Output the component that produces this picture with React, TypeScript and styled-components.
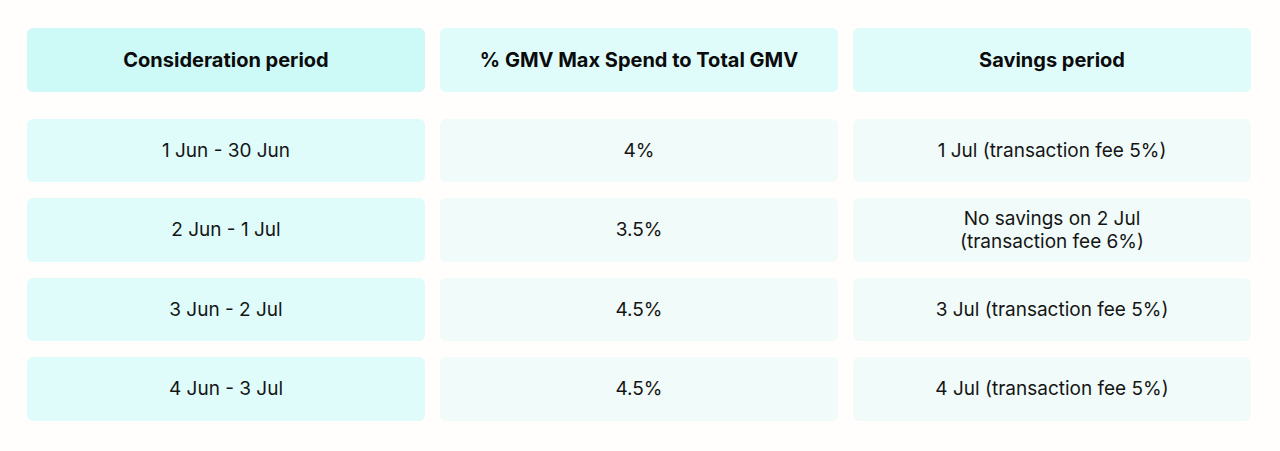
import React from "react";
import styled, { createGlobalStyle } from "styled-components";

const Global = createGlobalStyle`
  html, body { margin: 0; padding: 0; background: #fffefd; }
  body { font-family: Inter, "Noto Sans", sans-serif; color: #111; }
`;

const Page = styled.div`
  width: 1280px;
  height: 451px;
  box-sizing: border-box;
  padding: 28px 29px 0 27px;
  display: flex;
  flex-direction: column;
  gap: 27px;
`;

const Grid = styled.div`
  display: grid;
  grid-template-columns: repeat(3, 398px);
  column-gap: 15px;
  row-gap: 16px;
  grid-auto-rows: 63.5px;
`;

type CellProps = { $tone: "strong" | "light" | "pale" };

const tones = {
  strong: "#cdf9f6",
  light: "#dffcfb",
  pale: "#f1fbf9",
};

const HeadCell = styled.div<CellProps>`
  display: flex;
  align-items: center;
  justify-content: center;
  height: 64px;
  border-radius: 6px;
  background: ${(p) => tones[p.$tone]};
  font-weight: 700;
  font-size: 20px;
  color: #0b0b0b;
`;

const Cell = styled.div<CellProps>`
  display: flex;
  align-items: center;
  justify-content: center;
  text-align: center;
  border-radius: 6px;
  background: ${(p) => tones[p.$tone]};
  font-size: 19px;
  line-height: 23px;
  font-weight: 400;
  color: #151515;
`;

const rows: [string, string, React.ReactNode][] = [
  ["1 Jun - 30 Jun", "4%", "1 Jul (transaction fee 5%)"],
  [
    "2 Jun - 1 Jul",
    "3.5%",
    <>
      No savings on 2 Jul
      <br />
      (transaction fee 6%)
    </>,
  ],
  ["3 Jun - 2 Jul", "4.5%", "3 Jul (transaction fee 5%)"],
  ["4 Jun - 3 Jul", "4.5%", "4 Jul (transaction fee 5%)"],
];

export default function App() {
  return (
    <>
      <Global />
      <Page>
        <Grid>
          <HeadCell $tone="strong">Consideration period</HeadCell>
          <HeadCell $tone="light">% GMV Max Spend to Total GMV</HeadCell>
          <HeadCell $tone="light">Savings period</HeadCell>
        </Grid>
        <Grid>
          {rows.map((r, i) => (
            <React.Fragment key={i}>
              <Cell $tone="light">{r[0]}</Cell>
              <Cell $tone="pale">{r[1]}</Cell>
              <Cell $tone="pale">{r[2]}</Cell>
            </React.Fragment>
          ))}
        </Grid>
      </Page>
    </>
  );
}
